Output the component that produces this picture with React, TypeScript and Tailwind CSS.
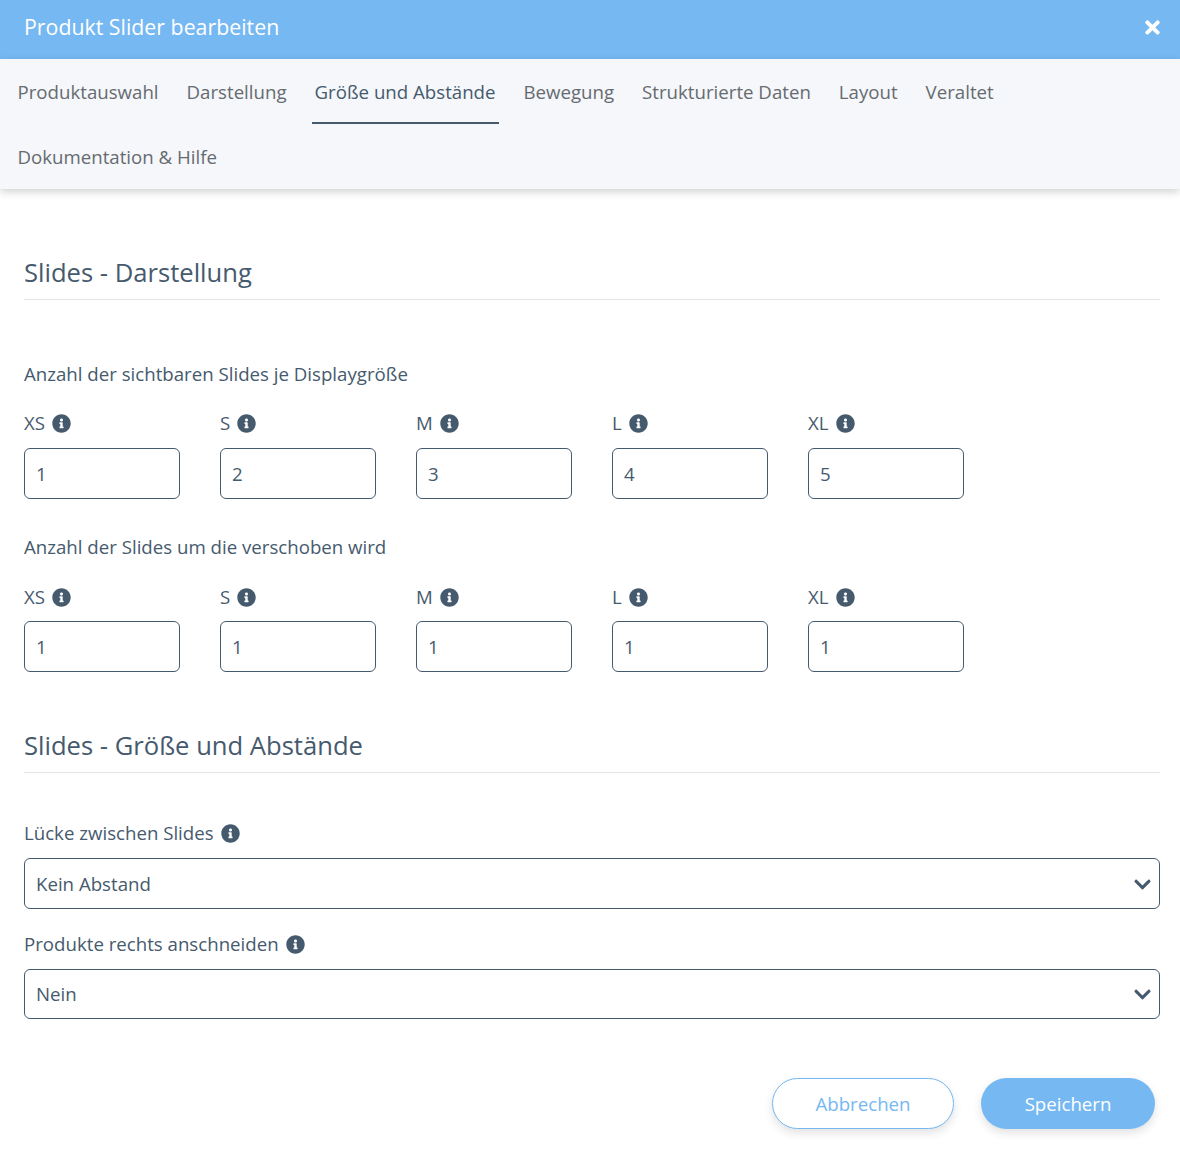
import { FaChevronDown, FaInfoCircle, FaTimes } from 'react-icons/fa';

const tabs = ['Produktauswahl', 'Darstellung', 'Größe und Abstände', 'Bewegung', 'Strukturierte Daten', 'Layout', 'Veraltet', 'Dokumentation & Hilfe'];
const sizes = ['XS', 'S', 'M', 'L', 'XL'];

function SizeRow({ values, tight }: { values: string[]; tight?: boolean }) {
    return (
        <div className="flex gap-[40px]">
            {sizes.map((size, i) => (
                <div key={size} className="w-[156px]">
                    <div className="flex h-[24px] items-center gap-[7px]">
                        {size}
                        <FaInfoCircle size={19} />
                    </div>
                    <div className={`${tight ? 'mt-[12px]' : 'mt-[13px]'} flex h-[51px] items-center rounded-[6px] border border-[#465a6e] px-[11px] pt-[1px]`}>
                        {values[i]}
                    </div>
                </div>
            ))}
        </div>
    );
}

function SelectField({ label, value, short }: { label: string; value: string; short?: boolean }) {
    return (
        <div>
            <div className="flex h-[24px] items-center gap-[7px]">
                {label}
                <FaInfoCircle size={19} />
            </div>
            <div className={`${short ? 'h-[50px]' : 'h-[51px] pt-[1px]'} mt-[13px] flex items-center justify-between rounded-[6px] border border-[#465a6e] pl-[11px] pr-[7px]`}>
                {value}
                <FaChevronDown size={19} />
            </div>
        </div>
    );
}

export default function App() {
    return (
        <div className="h-[1154px] w-[1180px] overflow-hidden bg-white font-['Open_Sans',sans-serif] text-[18.67px] text-[#465a6e]">
            <div className="flex h-[59px] items-center justify-between bg-[#75b8f2] pb-[5px] pl-[24px] pr-[17px] text-white">
                <h1 className="text-[21.33px]">Produkt Slider bearbeiten</h1>
                <FaTimes size={21} />
            </div>

            <div className="relative flex flex-wrap gap-x-[22px] bg-[#f5f7fb] pl-[14.5px] shadow-[0_3px_8px_rgba(0,0,0,0.18)]">
                {tabs.map((tab) => (
                    <div
                        key={tab}
                        className={
                            tab === 'Größe und Abstände'
                                ? 'flex h-[65px] items-center border-b-2 border-[#465a6e] px-[3px] pt-[3px] text-[#465a6e]'
                                : 'flex h-[65px] items-center border-b-2 border-transparent px-[3px] pt-[3px] text-[#666b70]'
                        }
                    >
                        {tab}
                    </div>
                ))}
            </div>

            <div className="pl-[24px] pr-[20px]">
                <h2 className="mt-[64px] h-[47px] border-b border-[#e2e4e8] text-[25.6px] leading-[40px]">Slides - Darstellung</h2>
                <p className="mt-[61px] leading-[26px]">Anzahl der sichtbaren Slides je Displaygröße</p>
                <div className="mt-[24px]">
                    <SizeRow values={['1', '2', '3', '4', '5']} />
                </div>
                <p className="mt-[35px] leading-[26px]">Anzahl der Slides um die verschoben wird</p>
                <div className="mt-[25px]">
                    <SizeRow tight values={['1', '1', '1', '1', '1']} />
                </div>

                <h2 className="mt-[55px] h-[46px] border-b border-[#e2e4e8] text-[25.6px] leading-[38px]">Slides - Größe und Abstände</h2>
                <div className="mt-[48px] flex flex-col gap-[23px]">
                    <SelectField label="Lücke zwischen Slides" value="Kein Abstand" />
                    <SelectField short label="Produkte rechts anschneiden" value="Nein" />
                </div>

                <div className="mt-[59px] flex justify-end gap-[27px] pr-[5px]">
                    <button className="h-[51px] w-[182px] rounded-full border border-[#75b8f2] bg-white pt-[1px] text-[#75b8f2] shadow-[0_4px_10px_rgba(0,0,0,0.12)]">
                        Abbrechen
                    </button>
                    <button className="h-[51px] w-[174px] rounded-full bg-[#75b8f2] pt-[1px] text-white shadow-[0_4px_10px_rgba(0,0,0,0.12)]">
                        Speichern
                    </button>
                </div>
            </div>
        </div>
    );
}
